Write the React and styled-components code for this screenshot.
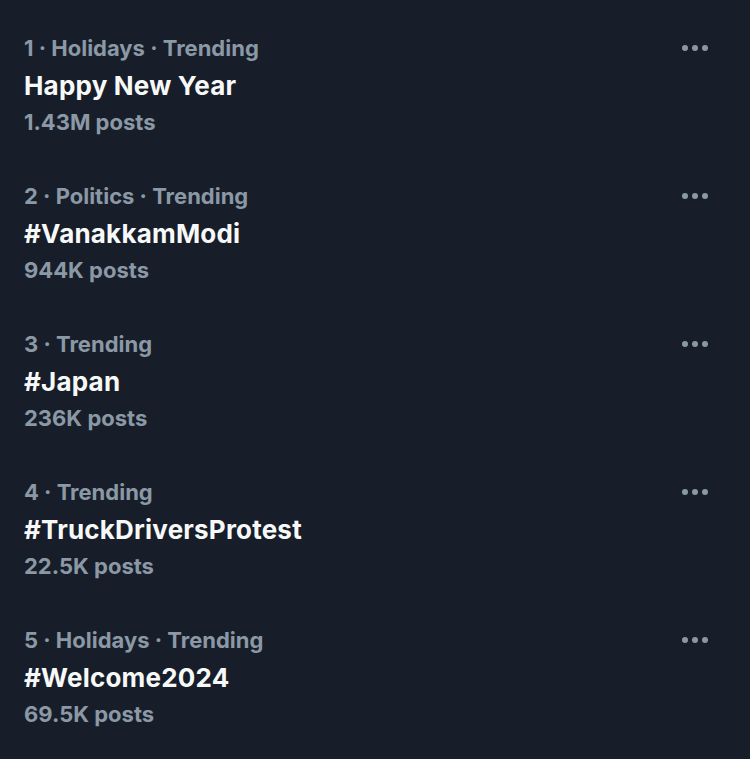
import React from "react";
import styled, { createGlobalStyle } from "styled-components";

const GlobalStyle = createGlobalStyle`
  html, body {
    margin: 0;
    padding: 0;
    background: #171e29;
  }
  body {
    font-family: Inter, "Noto Sans", sans-serif;
    -webkit-font-smoothing: antialiased;
  }
`;

const List = styled.div`
  width: 750px;
  min-height: 759px;
  box-sizing: border-box;
  padding-top: 11px;
  background: #171e29;
`;

const Item = styled.div`
  display: flex;
  align-items: flex-start;
  justify-content: space-between;
  padding: 18.5px 42px 18.5px 24px;
`;

const Body = styled.div`
  display: flex;
  flex-direction: column;
`;

const Meta = styled.div`
  color: #8b98a5;
  font-size: 22px;
  font-weight: 700;
  line-height: 37px;
  white-space: nowrap;
`;

const Title = styled.div`
  color: #f7f9f9;
  font-size: 26px;
  font-weight: 700;
  line-height: 37px;
  letter-spacing: 0.2px;
  white-space: nowrap;
`;

const More = styled.div`
  display: flex;
  gap: 4px;
  height: 37px;
  align-items: center;
`;

const Dot = styled.span`
  width: 6px;
  height: 6px;
  border-radius: 50%;
  background: #8b98a5;
`;

const trends = [
  { meta: "1 · Holidays · Trending", title: "Happy New Year", posts: "1.43M posts" },
  { meta: "2 · Politics · Trending", title: "#VanakkamModi", posts: "944K posts" },
  { meta: "3 · Trending", title: "#Japan", posts: "236K posts" },
  { meta: "4 · Trending", title: "#TruckDriversProtest", posts: "22.5K posts" },
  { meta: "5 · Holidays · Trending", title: "#Welcome2024", posts: "69.5K posts" },
];

const App = () => (
  <>
    <GlobalStyle />
    <List>
      {trends.map((t) => (
        <Item key={t.title}>
          <Body>
            <Meta>{t.meta}</Meta>
            <Title>{t.title}</Title>
            <Meta>{t.posts}</Meta>
          </Body>
          <More>
            <Dot />
            <Dot />
            <Dot />
          </More>
        </Item>
      ))}
    </List>
  </>
);

export default App;
